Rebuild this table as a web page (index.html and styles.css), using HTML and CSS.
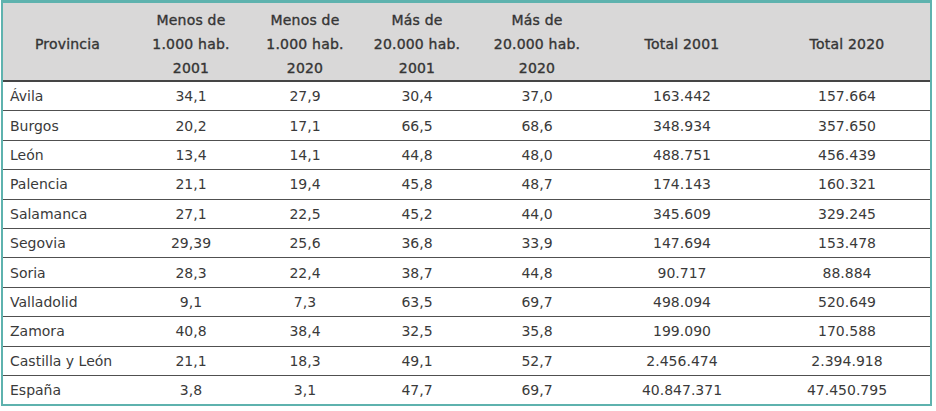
FILE: index.html
```html
<!DOCTYPE html>
<html lang="es">
<head>
<meta charset="utf-8">
<title>Población por tamaño de municipio</title>
<link rel="stylesheet" href="styles.css">
</head>
<body>
<div class="frame">
  <table class="data">
    <colgroup>
      <col class="c1"><col class="c2"><col class="c3"><col class="c4"><col class="c5"><col class="c6"><col class="c7">
    </colgroup>
    <thead>
      <tr>
        <th>Provincia</th>
        <th>Menos de<br>1.000 hab.<br>2001</th>
        <th>Menos de<br>1.000 hab.<br>2020</th>
        <th>Más de<br>20.000 hab.<br>2001</th>
        <th>Más de<br>20.000 hab.<br>2020</th>
        <th>Total 2001</th>
        <th>Total 2020</th>
      </tr>
    </thead>
    <tbody>
      <tr><td>Ávila</td><td>34,1</td><td>27,9</td><td>30,4</td><td>37,0</td><td>163.442</td><td>157.664</td></tr>
      <tr><td>Burgos</td><td>20,2</td><td>17,1</td><td>66,5</td><td>68,6</td><td>348.934</td><td>357.650</td></tr>
      <tr><td>León</td><td>13,4</td><td>14,1</td><td>44,8</td><td>48,0</td><td>488.751</td><td>456.439</td></tr>
      <tr><td>Palencia</td><td>21,1</td><td>19,4</td><td>45,8</td><td>48,7</td><td>174.143</td><td>160.321</td></tr>
      <tr><td>Salamanca</td><td>27,1</td><td>22,5</td><td>45,2</td><td>44,0</td><td>345.609</td><td>329.245</td></tr>
      <tr><td>Segovia</td><td>29,39</td><td>25,6</td><td>36,8</td><td>33,9</td><td>147.694</td><td>153.478</td></tr>
      <tr><td>Soria</td><td>28,3</td><td>22,4</td><td>38,7</td><td>44,8</td><td>90.717</td><td>88.884</td></tr>
      <tr><td>Valladolid</td><td>9,1</td><td>7,3</td><td>63,5</td><td>69,7</td><td>498.094</td><td>520.649</td></tr>
      <tr><td>Zamora</td><td>40,8</td><td>38,4</td><td>32,5</td><td>35,8</td><td>199.090</td><td>170.588</td></tr>
      <tr><td>Castilla y León</td><td>21,1</td><td>18,3</td><td>49,1</td><td>52,7</td><td>2.456.474</td><td>2.394.918</td></tr>
      <tr><td>España</td><td>3,8</td><td>3,1</td><td>47,7</td><td>69,7</td><td>40.847.371</td><td>47.450.795</td></tr>
    </tbody>
  </table>
</div>
</body>
</html>
```

FILE: styles.css
```css
html, body {
  margin: 0;
  padding: 0;
  background: #ffffff;
}

body {
  font-family: "DejaVu Sans", "Liberation Sans", sans-serif;
  color: #3a3a3a;
}

.frame {
  margin-left: 1px;
  width: 927px;
  border: 2px solid #5eb2ae;
  border-top-width: 3px;
}

.data {
  width: 927px;
  border-collapse: collapse;
  table-layout: fixed;
}

.c1 { width: 129px; }
.c2 { width: 118px; }
.c3 { width: 110px; }
.c4 { width: 114px; }
.c5 { width: 126px; }
.c6 { width: 164px; }
.c7 { width: 166px; }

.data th {
  background: #d9d8d8;
  color: #353535;
  font-size: 14px;
  font-weight: normal;
  -webkit-text-stroke: 0.35px #353535;
  letter-spacing: 0.2px;
  line-height: 24px;
  height: 72px;
  padding: 5px 0 0 0;
  text-align: center;
  vertical-align: middle;
  border-bottom: 2px solid #454545;
}

.data td {
  font-size: 14px;
  height: 28.4px;
  padding: 0;
  text-align: center;
  vertical-align: middle;
  border-bottom: 1px solid #505050;
  white-space: nowrap;
}

.data td:first-child {
  text-align: left;
  padding-left: 7px;
}

.data tbody tr:last-child td {
  border-bottom: none;
}
```
